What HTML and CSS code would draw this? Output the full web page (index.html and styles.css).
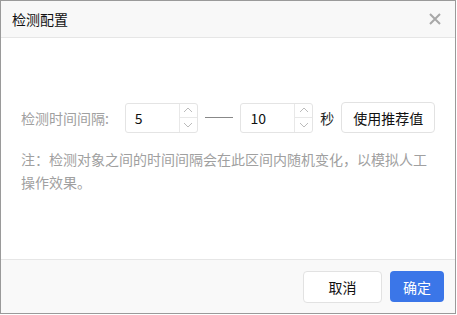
FILE: index.html
```html
<!DOCTYPE html>
<html>
<head>
<title>检测配置</title>
<meta charset="utf-8">
<link rel="stylesheet" href="styles.css">
</head>
<body>
  <div class="dialog">
    <div class="dlgHead">
      <span class="dlgTitle">检测配置</span>
      <span class="dlgClose">
        <svg width="12" height="12" viewBox="0 0 12 12"><path d="M1 1L11 11M11 1L1 11" stroke="#a8a8a8" stroke-width="2" fill="none"/></svg>
      </span>
    </div>

    <div class="dlgBody">
      <div class="row">
        <span class="label">检测时间间隔:</span>
        <div class="numInput">
          <span class="numVal">5</span>
          <div class="spin">
            <span class="spinBtn"><svg width="10" height="6" viewBox="0 0 10 6"><path d="M1 5L5 1L9 5" stroke="#bbb" fill="none"/></svg></span>
            <span class="spinBtn"><svg width="10" height="6" viewBox="0 0 10 6"><path d="M1 1L5 5L9 1" stroke="#bbb" fill="none"/></svg></span>
          </div>
        </div>
        <span class="dash"></span>
        <div class="numInput">
          <span class="numVal">10</span>
          <div class="spin">
            <span class="spinBtn"><svg width="10" height="6" viewBox="0 0 10 6"><path d="M1 5L5 1L9 5" stroke="#bbb" fill="none"/></svg></span>
            <span class="spinBtn"><svg width="10" height="6" viewBox="0 0 10 6"><path d="M1 1L5 5L9 1" stroke="#bbb" fill="none"/></svg></span>
          </div>
        </div>
        <span class="unit">秒</span>
        <span class="btn btnDefault btnRec">使用推荐值</span>
      </div>
      <p class="note">注：检测对象之间的时间间隔会在此区间内随机变化，以模拟人工操作效果。</p>
    </div>

    <div class="dlgFoot">
      <span class="btn btnDefault btnCancel">取消</span>
      <span class="btn btnPrimary">确定</span>
    </div>
  </div>
</body>
</html>
```

FILE: styles.css
```css
body {margin: 0; background: #fff;
      font-family: "Noto Sans CJK SC", "Noto Sans", sans-serif; font-size: 14px; color: #222;
}
.dialog {width: 456px; height: 314px; box-sizing: border-box;
         border: 1px solid #9a9a9a; background: #fff;
         display: flex; flex-direction: column;
}
.dlgHead {height: 36px; flex: none; box-sizing: content-box;
          display: flex; align-items: center; justify-content: space-between;
          padding: 0 14px 0 11px;
          background: #f8f8f8; border-bottom: 1px solid #e6e6e6;
}
.dlgTitle {font-size: 14px; color: #111;}
.dlgClose {display: flex; cursor: pointer;}

.dlgBody {flex: 1; padding: 64px 20px 0 20px;}
.row {display: flex; align-items: center; height: 31px;}
.label {width: 104px; color: #a0a0a0; white-space: nowrap;}
.numInput {width: 73px; height: 30px; box-sizing: border-box;
           display: flex; border: 1px solid #e4e4e4; border-radius: 3px;
}
.numVal {flex: 1; padding-left: 9px; line-height: 28px; color: #111;}
.spin {width: 17px; display: flex; flex-direction: column; border-left: 1px solid #e8e8e8;}
.spinBtn {flex: 1; display: flex; align-items: center; justify-content: center;}
.spinBtn + .spinBtn {border-top: 1px solid #e8e8e8;}
.dash {width: 29px; margin: 0 7px; border-top: 1px solid #888;}
.unit {margin: 0 7px 0 7px; color: #222;}

.btn {display: inline-flex; align-items: center; justify-content: center;
      box-sizing: border-box; border-radius: 4px; cursor: pointer;
}
.btnDefault {background: #fff; border: 1px solid #e2e2e2; color: #111;}
.btnRec {width: 94px; height: 31px;}
.note {margin: 15px 0 0 0; line-height: 23px; color: #a0a0a0;}

.dlgFoot {height: 53px; flex: none;
          display: flex; align-items: center; justify-content: flex-end; gap: 8px;
          padding-right: 11px;
          background: #f9f9f9; border-top: 1px solid #e6e6e6;
}
.btnCancel {width: 79px; height: 32px;}
.btnPrimary {width: 54px; height: 31px; background: #3b76e8; color: #fff; border: 0;}
```
